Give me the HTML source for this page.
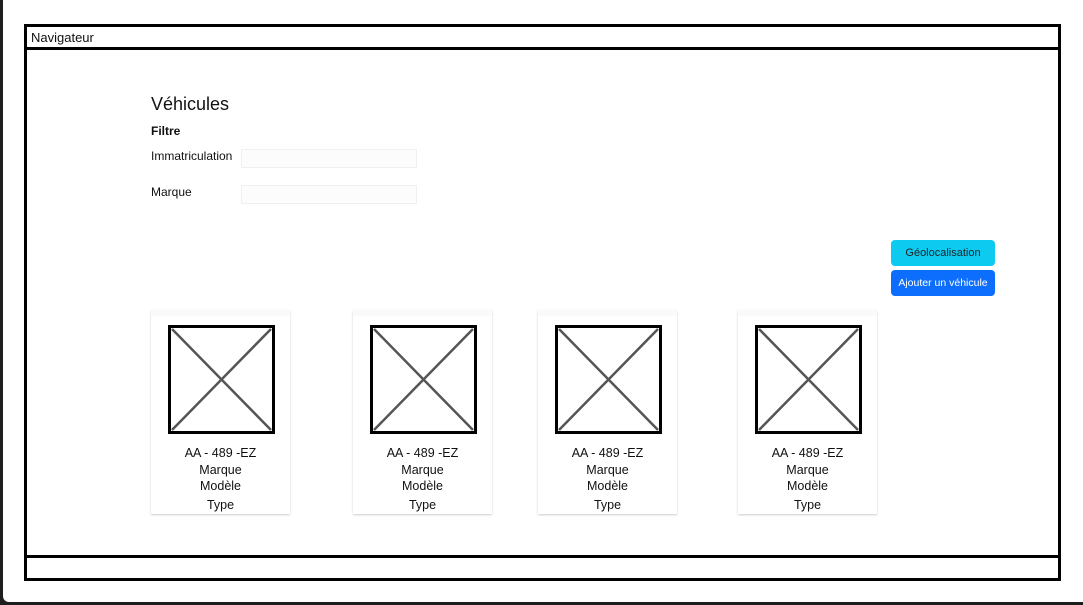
<!DOCTYPE html>
<html><head><meta charset="utf-8"><style>
*{margin:0;padding:0;box-sizing:border-box}
body{width:1083px;height:605px;background:#1e1e1e;position:relative;overflow:hidden;font-family:"Liberation Sans",sans-serif;color:#111}
.page{position:absolute;left:3px;top:0;width:1080px;height:602px;background:#fff;border-bottom-left-radius:6px}
.frame{position:absolute;left:24px;top:24px;width:1037px;height:557px;border:3px solid #000}
.nav{position:absolute;left:0;top:0;right:0;height:23px;border-bottom:3px solid #000;font-size:13px;padding:3px 0 0 4px}
.foot{position:absolute;left:0;bottom:0;right:0;height:23px;border-top:3px solid #000}
.abs{position:absolute}
.inp{position:absolute;left:241px;width:176px;height:19px;border:1px solid #f0f0f0;background:#fcfcfc}
.btn{position:absolute;left:891px;width:104px;border-radius:4px;font-size:11px;text-align:center}
.card{position:absolute;top:310px;width:139px;height:204px;background:#fff;box-shadow:0 1px 2px rgba(0,0,0,.2);border-top:6px solid #fafafa;text-align:center;font-size:12.5px;line-height:16.5px}
.card svg{position:absolute;left:17px;top:9px}
.card .t{position:absolute;left:0;right:0;top:129px}
</style></head><body>
<div class="page"></div>
<div class="frame"><div class="nav">Navigateur</div><div class="foot"></div></div>
<div class="abs" style="left:151px;top:94px;font-size:18px">Véhicules</div>
<div class="abs" style="left:151px;top:124px;font-size:12px;font-weight:bold">Filtre</div>
<div class="abs" style="left:151px;top:149px;font-size:12px">Immatriculation</div>
<div class="abs" style="left:151px;top:185px;font-size:12px">Marque</div>
<div class="inp" style="top:149px"></div>
<div class="inp" style="top:185px"></div>
<div class="btn" style="top:240px;height:26px;line-height:26px;background:#0dcaf0;color:#222">Géolocalisation</div>
<div class="btn" style="top:270px;height:26px;line-height:26px;background:#0d6efd;color:#fff;font-size:10.5px">Ajouter un véhicule</div>
<div class="card" style="left:151px"><svg width="107" height="109"><rect x="1.5" y="1.5" width="104" height="106" fill="none" stroke="#000" stroke-width="3"/><path d="M4 4L103 105M103 4L4 105" stroke="#555" stroke-width="2.5"/></svg><div class="t">AA - 489 -EZ<br>Marque<br>Modèle<br><span style="line-height:20px">Type</span></div></div>
<div class="card" style="left:353px"><svg width="107" height="109"><rect x="1.5" y="1.5" width="104" height="106" fill="none" stroke="#000" stroke-width="3"/><path d="M4 4L103 105M103 4L4 105" stroke="#555" stroke-width="2.5"/></svg><div class="t">AA - 489 -EZ<br>Marque<br>Modèle<br><span style="line-height:20px">Type</span></div></div>
<div class="card" style="left:538px"><svg width="107" height="109"><rect x="1.5" y="1.5" width="104" height="106" fill="none" stroke="#000" stroke-width="3"/><path d="M4 4L103 105M103 4L4 105" stroke="#555" stroke-width="2.5"/></svg><div class="t">AA - 489 -EZ<br>Marque<br>Modèle<br><span style="line-height:20px">Type</span></div></div>
<div class="card" style="left:738px"><svg width="107" height="109"><rect x="1.5" y="1.5" width="104" height="106" fill="none" stroke="#000" stroke-width="3"/><path d="M4 4L103 105M103 4L4 105" stroke="#555" stroke-width="2.5"/></svg><div class="t">AA - 489 -EZ<br>Marque<br>Modèle<br><span style="line-height:20px">Type</span></div></div>
</body></html>
